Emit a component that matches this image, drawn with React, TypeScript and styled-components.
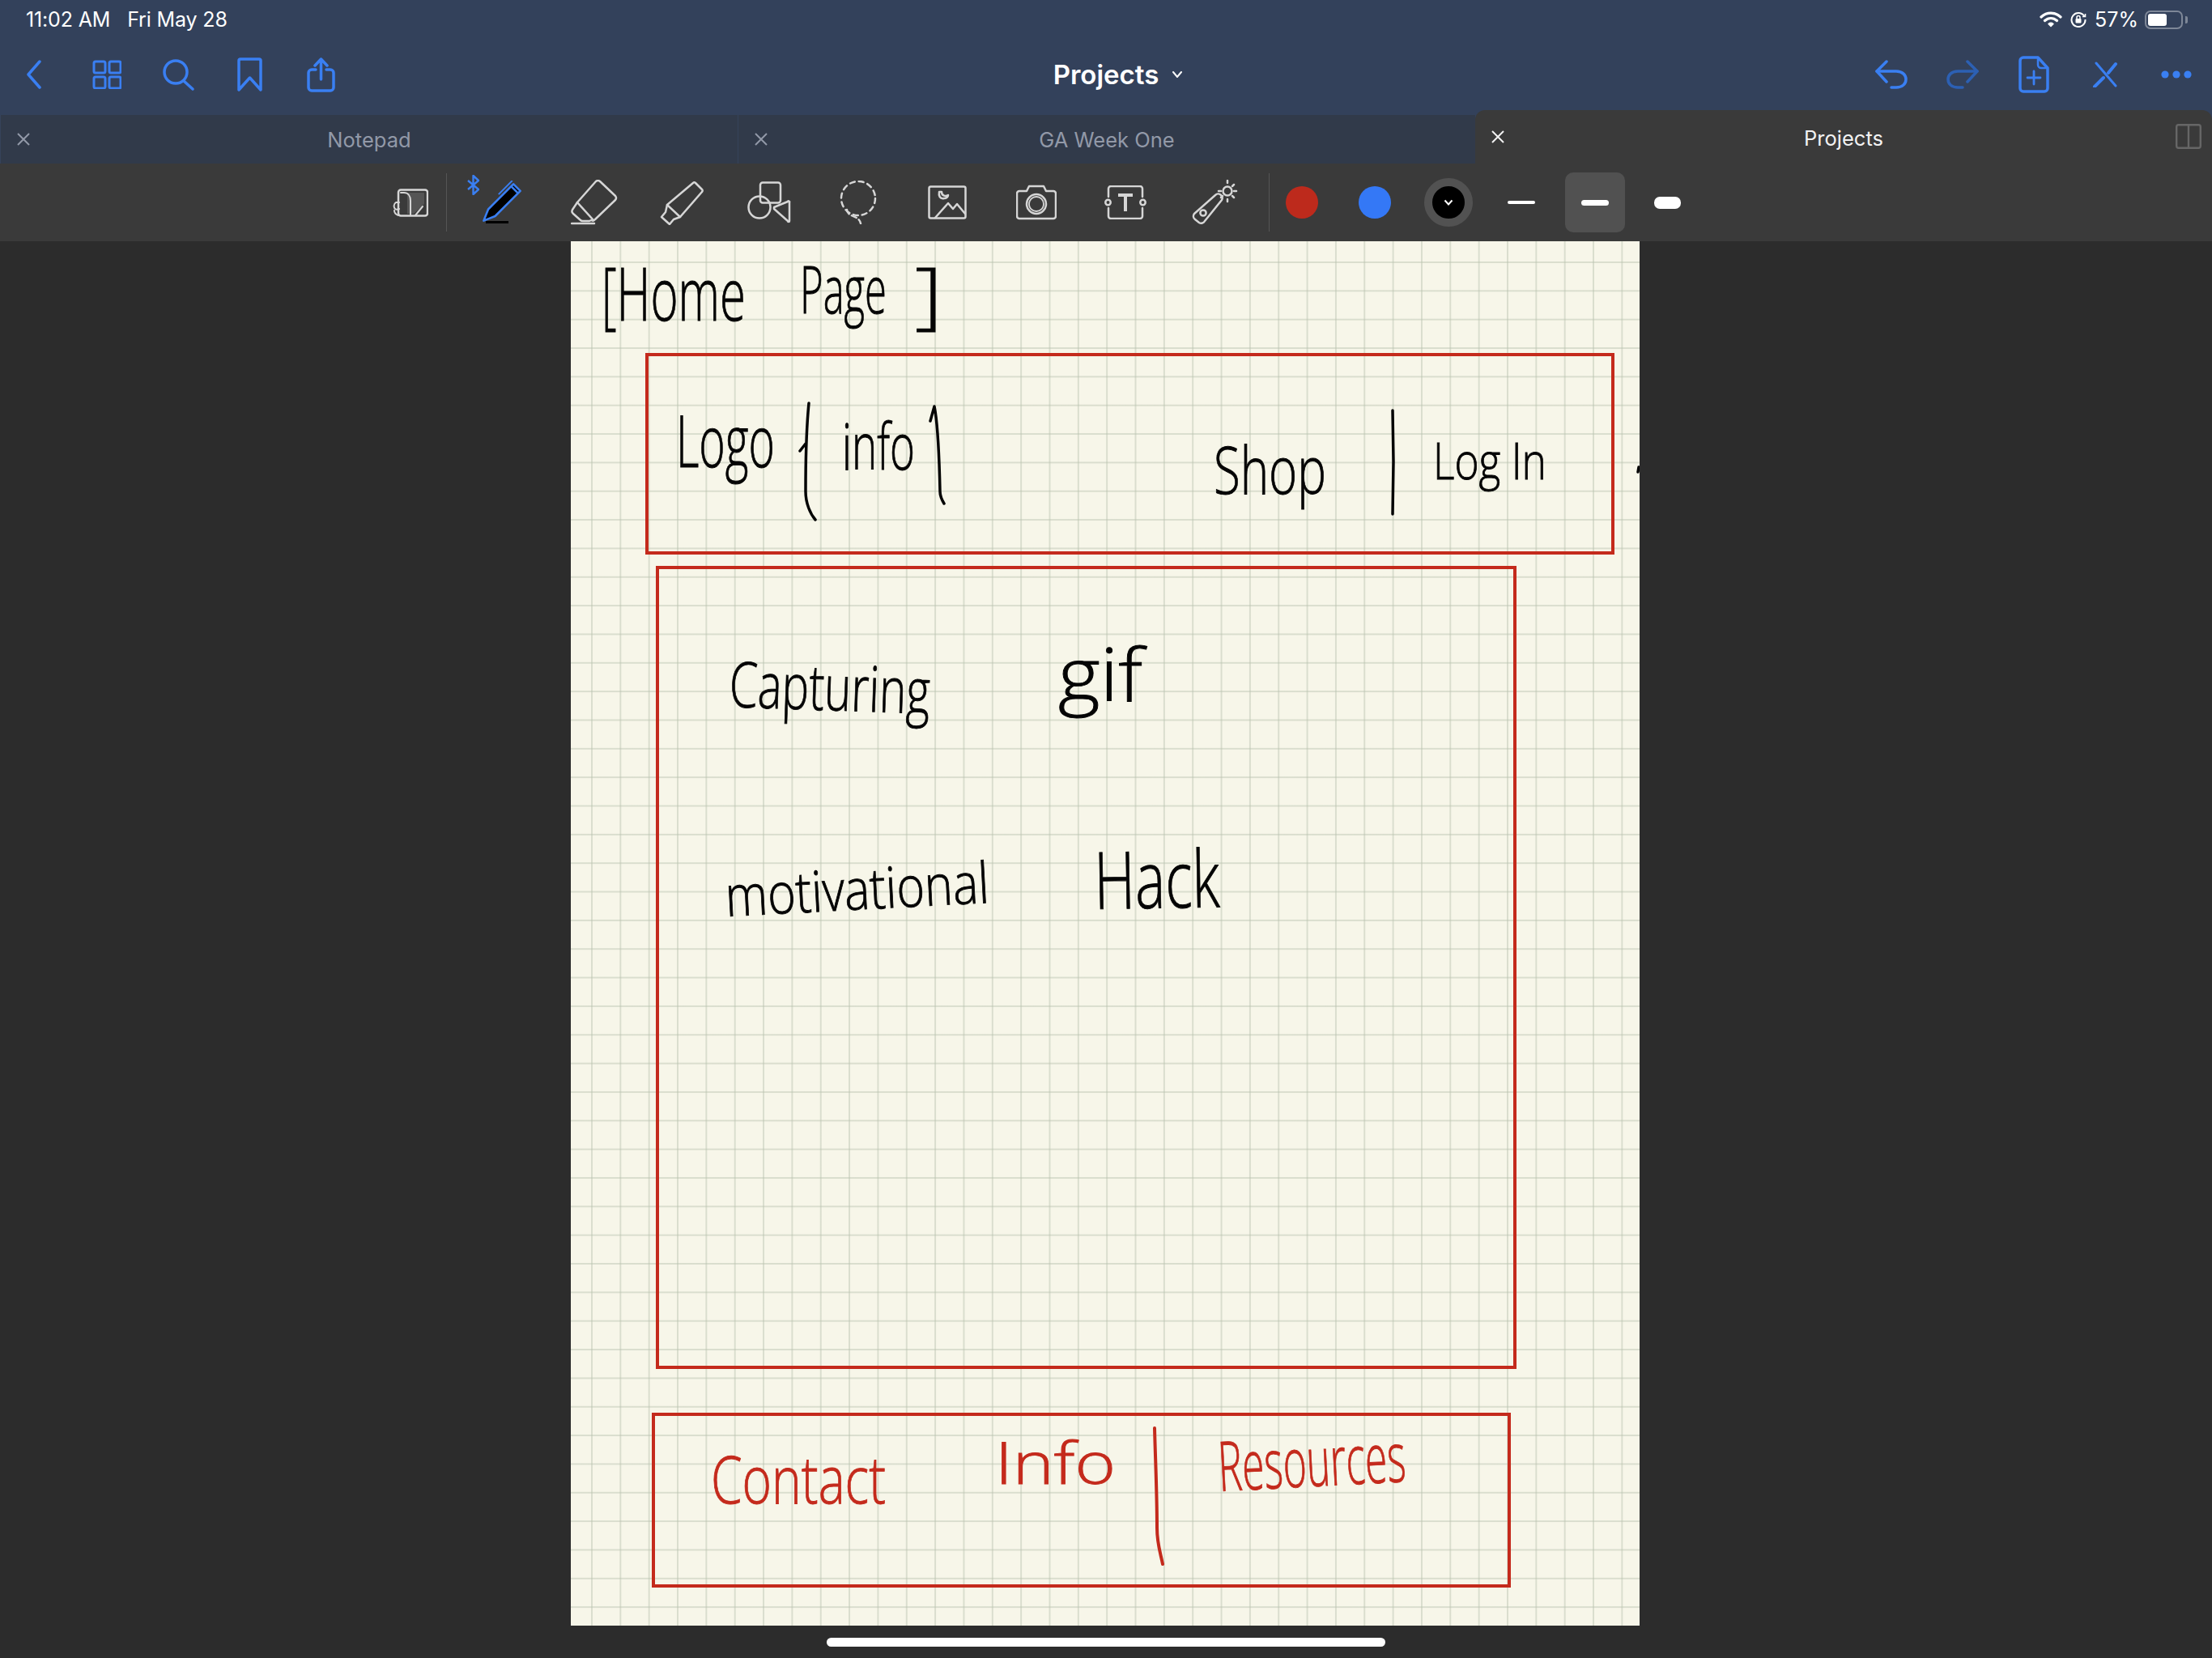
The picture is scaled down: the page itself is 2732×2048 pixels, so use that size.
import React from "react";
import styled, { createGlobalStyle } from "styled-components";

const Global = createGlobalStyle`
  html, body { margin: 0; padding: 0; background: #2c2c2c; }
  body { width: 2732px; height: 2048px; overflow: hidden; font-family: Inter, "Liberation Sans", sans-serif; }
`;

const Screen = styled.div`
  width: 2732px; height: 2048px; display: flex; flex-direction: column; background: #2c2c2c;
`;
const StatusBar = styled.div`
  height: 48px; background: #33415b; color: #fff; display: flex; align-items: center;
  justify-content: space-between; padding: 0 30px 0 32px; box-sizing: border-box; font-size: 25px;
`;
const StatusLeft = styled.div`display: flex; gap: 21px; letter-spacing: -0.15px;`;
const StatusRight = styled.div`display: flex; align-items: center; gap: 10px;`;
const Battery = styled.div`
  width: 47px; height: 23px; border: 2px solid #7e8798; border-radius: 7px; box-sizing: border-box;
  padding: 2px; display: flex; margin-left: -2px;
`;
const BatteryFill = styled.div`width: 23px; background: #fff; border-radius: 3px;`;
const BatteryCap = styled.div`width: 3px; height: 9px; background: #7e8798; border-radius: 0 2px 2px 0; margin-left: -7px;`;

const NavBar = styled.div`
  height: 94px; background: #33415b; display: grid; grid-template-columns: 1fr auto 1fr;
  align-items: center; padding-bottom: 6px; box-sizing: border-box;
`;
const NavGroup = styled.div<{ $end?: boolean }>`
  display: flex; justify-content: ${p => (p.$end ? "flex-end" : "flex-start")};
`;
const NavSlot = styled.div<{ $pull?: number }>`
  width: 88px; height: 50px; display: flex; align-items: center; justify-content: center;
  padding-right: ${p => p.$pull ?? 0}px; box-sizing: border-box;
`;
const Title = styled.div`
  display: flex; align-items: center; gap: 17px; padding-left: 29px; color: #fff; font-size: 33px; font-weight: 600;
`;

const TabBar = styled.div`height: 60px; display: flex; background: #33415b;`;
const Tab = styled.div<{ $active?: boolean }>`
  flex: 1; display: flex; align-items: center; justify-content: center; position: relative;
  background: ${p => (p.$active ? "#3a3a3a" : "#313a4a")};
  color: ${p => (p.$active ? "#f2f2f2" : "#9299a8")};
  font-size: 25.5px;
  margin-top: ${p => (p.$active ? "-6px" : "0")};
  border-radius: ${p => (p.$active ? "12px 12px 0 0" : "0")};
  border-left: ${p => (p.$active ? "none" : "1px solid #36425a")};
  padding-top: ${p => (p.$active ? "2px" : "0")};
`;
const TabClose = styled.svg`position: absolute; left: 20px; top: 50%; margin-top: -8px;`;
const SplitIcon = styled.svg`position: absolute; right: 13px; top: 17px;`;

const Toolbar = styled.div`
  height: 96px; background: #3a3a3a; display: flex; align-items: center; padding-left: 470px; box-sizing: border-box;
`;
const PageSlot = styled.div`width: 74px; display: flex; justify-content: center;`;
const Divider = styled.div<{ $before: number; $after: number }>`
  width: 1px; height: 72px; background: #555; margin: 0 ${p => p.$after}px 0 ${p => p.$before}px;
`;
const ToolSlot = styled.div<{ $nudge?: number }>`
  width: 110px; height: 96px; display: flex; align-items: center; justify-content: center; position: relative;
  padding-left: ${p => p.$nudge ?? 0}px; box-sizing: border-box;
`;
const Bluetooth = styled.svg`position: absolute; left: 12px; top: 14px;`;
const Swatches = styled.div`display: flex; gap: 16.4px;`;
const Swatch = styled.div<{ $selected?: boolean }>`
  width: 74px; height: 74px; border-radius: 10px; display: flex; align-items: center; justify-content: center;
  background: ${p => (p.$selected ? "#515151" : "transparent")};
`;
const Dot = styled.div<{ $color: string }>`width: 40px; height: 40px; border-radius: 50%; background: ${p => p.$color};`;
const Ring = styled.div`
  width: 60px; height: 60px; border-radius: 50%; background: #000; border: 10px solid #525252;
  box-sizing: border-box; display: flex; align-items: center; justify-content: center;
`;
const Stroke = styled.div<{ $w: number; $h: number }>`
  width: ${p => p.$w}px; height: ${p => p.$h}px; border-radius: ${p => Math.min(p.$h / 2, 7)}px; background: #fff;
`;

const Canvas = styled.div`flex: 1; display: flex; justify-content: center; margin-right: 2px; background: #2c2c2c;`;
const Paper = styled.div`
  width: 1320px; height: 1710px; position: relative; background-color: #f7f6e9;
  background-image:
    linear-gradient(to right, rgba(186,195,176,.48) 2px, transparent 2px),
    linear-gradient(to bottom, rgba(186,195,176,.48) 2px, transparent 2px);
  background-size: 35.35px 35.35px;
  background-position: 25px 25px;
`;
const InkLayer = styled.svg`position: absolute; inset: 0; width: 100%; height: 100%;`;
const Ink = styled.text<{ $red?: boolean }>`
  font-family: "Open Sans", "Liberation Sans", sans-serif;
  font-weight: 300;
  fill: ${p => (p.$red ? "#c42a1c" : "#050505")};
  stroke: ${p => (p.$red ? "#c42a1c" : "#050505")};
  stroke-width: 0.9px;
`;
const Footer = styled.div`height: 40px; display: flex; align-items: center; justify-content: center;`;
const HomeBar = styled.div`width: 690px; height: 11px; border-radius: 6px; background: #fff;`;

const BLUE = "#3a7ff2";
const G = "#d6d6d6";

const Close = () => (
  <TabClose width="16" height="16" viewBox="0 0 16 16" fill="none" stroke="currentColor" strokeWidth="2"><path d="M1 1l14 14M15 1L1 15" /></TabClose>
);

const blue = { fill: "none", stroke: BLUE, strokeWidth: 3.5, strokeLinecap: "round" as const, strokeLinejoin: "round" as const };
const gray = { fill: "none", stroke: G, strokeWidth: 2.5, strokeLinecap: "round" as const, strokeLinejoin: "round" as const };

const InkItems: [string, number, number, number, number, number?, boolean?][] = [
  ["[Home", 743, 396, 178, 90],
  ["Page", 988, 387, 107, 82],
  ["]", 1130, 396, 34, 90],
  ["Logo", 835, 577, 122, 88],
  ["info", 1040, 580, 90, 80],
  ["Shop", 1499, 610, 139, 82],
  ["Log In", 1770, 592, 140, 62, 0],
  ["Capturing", 900, 873, 248, 78, 2],
  ["gif", 1307, 866, 104, 90],
  ["motivational", 897, 1132, 326, 70, -3],
  ["Hack", 1352, 1123, 155, 98, -1],
  ["Contact", 878, 1857, 216, 82, 0, true],
  ["Info", 1229, 1833, 149, 72, 0, true],
  ["Resources", 1506, 1842, 232, 85, -3, true],
];

export default function App() {
  return (
    <Screen>
      <Global />
      <StatusBar>
        <StatusLeft><span>11:02 AM</span><span>Fri May 28</span></StatusLeft>
        <StatusRight>
          <svg width="28" height="20" viewBox="0 0 28 20" fill="none" stroke="#fff" strokeWidth="3.2" strokeLinecap="round">
            <path d="M2 7c7-6.5 17-6.5 24 0" /><path d="M6.5 11.5c4.5-4 10.5-4 15 0" /><path d="M14 18.5l-3-3c1.8-1.4 4.2-1.4 6 0z" fill="#fff" strokeWidth="1.5" strokeLinejoin="round" />
          </svg>
          <svg width="20" height="20" viewBox="0 0 20 20" fill="none" stroke="#fff" strokeWidth="2">
            <path d="M17.5 6.5A8.5 8.5 0 1 0 18.5 10" /><path d="M15 6.5h3.5V3" strokeWidth="1.6" /><rect x="6.5" y="9" width="7" height="5.5" rx="1" fill="#fff" stroke="none" /><path d="M8 9V7.5a2 2 0 0 1 4 0V9" strokeWidth="1.5" />
          </svg>
          <span>57%</span>
          <Battery><BatteryFill /></Battery>
          <BatteryCap />
        </StatusRight>
      </StatusBar>

      <NavBar>
        <NavGroup>
          <NavSlot $pull={5}><svg width="20" height="36" viewBox="0 0 20 36" {...blue}><path d="M17 2L3 18l14 16" /></svg></NavSlot>
          <NavSlot><svg width="36" height="36" viewBox="0 0 36 36" {...blue} strokeWidth="3"><rect x="2" y="2" width="14" height="14" rx="2" /><rect x="21" y="2" width="14" height="14" rx="2" /><rect x="2" y="21" width="14" height="14" rx="2" /><rect x="21" y="21" width="14" height="14" rx="2" /></svg></NavSlot>
          <NavSlot><svg width="39" height="39" viewBox="0 0 39 39" {...blue}><circle cx="16" cy="16" r="14" /><path d="M26 27l11 10" /></svg></NavSlot>
          <NavSlot><svg width="31" height="42" viewBox="0 0 31 42" {...blue}><path d="M2 4a2 2 0 0 1 2-2h23a2 2 0 0 1 2 2v36L15.5 25 2 40z" /></svg></NavSlot>
          <NavSlot><svg width="35" height="43" viewBox="0 0 35 43" {...blue}><path d="M11 15H6a4 4 0 0 0-4 4v18a4 4 0 0 0 4 4h23a4 4 0 0 0 4-4V19a4 4 0 0 0-4-4h-5" /><path d="M17.5 27V2M10 10l7.5-8 7.5 8" /></svg></NavSlot>
        </NavGroup>
        <Title>
          <span>Projects</span>
          <svg width="12" height="8" viewBox="0 0 12 8" fill="none" stroke="#fff" strokeWidth="2" strokeLinecap="round"><path d="M1 1l5 6 5-6" /></svg>
        </Title>
        <NavGroup $end>
          <NavSlot><svg width="40" height="36" viewBox="0 0 40 36" {...blue}><path d="M14 2L2 14l12 13" /><path d="M2 14h24c8 0 12 5 12 10 0 6-5 10-12 10h-6" /></svg></NavSlot>
          <NavSlot><svg width="40" height="36" viewBox="0 0 40 36" {...blue} stroke="#2c60b4"><path d="M26 2l12 12-12 13" /><path d="M38 14H14C6 14 2 19 2 24c0 6 5 10 12 10h6" /></svg></NavSlot>
          <NavSlot><svg width="38" height="46" viewBox="0 0 38 46" {...blue}><path d="M6 2h18l12 13v25a4 4 0 0 1-4 4H6a4 4 0 0 1-4-4V6a4 4 0 0 1 4-4z" /><path d="M24 2v9a4 4 0 0 0 4 4h8" strokeWidth="2.5" /><path d="M19 19v16M11 27h16" strokeWidth="2.8" /></svg></NavSlot>
          <NavSlot><svg width="32" height="32" viewBox="0 0 32 32" {...blue}><path d="M5 2l24 28" strokeWidth="3" /><path d="M29 3l-9 11M14 20L3 31" strokeWidth="4" /></svg></NavSlot>
          <NavSlot><svg width="38" height="10" viewBox="0 0 38 10" fill={BLUE}><circle cx="5" cy="5" r="4.6" /><circle cx="19" cy="5" r="4.6" /><circle cx="33" cy="5" r="4.6" /></svg></NavSlot>
        </NavGroup>
      </NavBar>

      <TabBar>
        <Tab><Close />Notepad</Tab>
        <Tab><Close />GA Week One</Tab>
        <Tab $active><Close />Projects
          <SplitIcon width="32" height="31" viewBox="0 0 32 31" fill="none" stroke="#666" strokeWidth="2.4"><rect x="1.2" y="1.2" width="29.6" height="28.6" rx="2.5" /><path d="M16 1v29" /></SplitIcon>
        </Tab>
      </TabBar>

      <Toolbar>
        <PageSlot>
          <svg width="44" height="35" viewBox="0 0 44 35" {...gray}>
            <path d="M18 5h21v14L26 31h-8z" fill="#555" stroke="none" />
            <rect x="7" y="1.5" width="36" height="32" rx="3" />
            <path d="M10 5h4c5 0 8 4 8 10v18M37 22L28 33M8 17H4c-3 2-3 6-1 8 1 1 3 1 5 0M2 27c0 3 2 5 5 6" strokeWidth="2" />
          </svg>
        </PageSlot>
        <Divider $before={7} $after={13} />
        <ToolSlot>
          <Bluetooth width="15" height="25" viewBox="0 0 15 25" fill="none" stroke={BLUE} strokeWidth="2.4" strokeLinejoin="round"><path d="M1 7l13 11-6.500 6V1L14 7 1 18" /></Bluetooth>
          <svg width="54" height="54" viewBox="-27 -27 54 54">
            <g transform="rotate(45)">
              <path d="M-6 -26h12v44l-6 14-6-14z" fill="#000" stroke={BLUE} strokeWidth="2.6" strokeLinejoin="round" />
              <path d="M-6 -22H6" stroke={BLUE} strokeWidth="2.6" />
              <path d="M-10 -28v24" stroke={BLUE} strokeWidth="2" />
            </g>
            <path d="M-20 24.500H8" stroke="#000" strokeWidth="3" />
          </svg>
        </ToolSlot>
        <ToolSlot $nudge={8}>
          <svg width="58" height="56" viewBox="0 0 58 56" {...gray}>
            <path d="M31 2a4 4 0 0 1 5 0l19 18a4 4 0 0 1 0 5L30 49a4 4 0 0 1-5 1l-2 1h-8a4 4 0 0 1-3-1L3 42a4 4 0 0 1-1-5l6-9z" />
            <path d="M8 28l20 22" />
            <path d="M1 54h28" />
          </svg>
        </ToolSlot>
        <ToolSlot>
          <svg width="57" height="55" viewBox="0 0 57 55" {...gray}>
            <path d="M44 3a2 2 0 0 1 3 0l8 8a2 2 0 0 1 0 3L28 45l-8 3-5 6-10-9 5-6 2-9z" />
            <path d="M12 30l16 15" />
          </svg>
        </ToolSlot>
        <ToolSlot>
          <svg width="54" height="52" viewBox="0 0 54 52" {...gray}>
            <rect x="16" y="1.500" width="25" height="25" rx="3" />
            <circle cx="15" cy="32" r="13.500" />
            <path d="M33 32l17-7a1 1 0 0 1 2 1v23a1 1 0 0 1-2 0l-17-15z" />
          </svg>
        </ToolSlot>
        <ToolSlot>
          <svg width="48" height="54" viewBox="0 0 48 54" {...gray}>
            <circle cx="24" cy="22" r="21" strokeDasharray="6 5" />
            <path d="M10 36c0 5 5 7 10 9 4 2 6 4 7 8" strokeDasharray="6 4" />
          </svg>
        </ToolSlot>
        <ToolSlot>
          <svg width="48" height="42" viewBox="0 0 48 42" {...gray}>
            <rect x="1.500" y="1.500" width="45" height="39" rx="2" />
            <path d="M14 8c-1 5 1 9 6 8 3 0 5-2 5-4-3 2-8 1-8-4z" />
            <path d="M9 40l16-18 6 7 5-6 10 12" />
          </svg>
        </ToolSlot>
        <ToolSlot>
          <svg width="50" height="44" viewBox="0 0 50 44" {...gray}>
            <path d="M4 8h9l3-6h18l3 6h9a3 3 0 0 1 3 3v28a3 3 0 0 1-3 3H4a3 3 0 0 1-3-3V11a3 3 0 0 1 3-3z" />
            <circle cx="25" cy="24" r="12" />
            <circle cx="25" cy="24" r="9" strokeWidth="1.800" />
          </svg>
        </ToolSlot>
        <ToolSlot>
          <svg width="52" height="42" viewBox="0 0 52 42" {...gray}>
            <path d="M5 14V4a3 3 0 0 1 3-3h36a3 3 0 0 1 3 3v10M5 28v10a3 3 0 0 0 3 3h36a3 3 0 0 0 3-3V28" />
            <circle cx="4.500" cy="21" r="3.200" /><circle cx="47.500" cy="21" r="3.200" />
            <path d="M17 12h18M26 12v20" strokeWidth="4" strokeLinecap="butt" />
          </svg>
        </ToolSlot>
        <ToolSlot>
          <svg width="58" height="56" viewBox="0 0 58 56" {...gray}>
            <path d="M30 19a5 5 0 0 1 7 0 5 5 0 0 1 1 6L17 51a5 5 0 0 1-7 2l-5-4a5 5 0 0 1-1-7z" />
            <circle cx="15" cy="41" r="3.600" />
            <circle cx="45" cy="14" r="5.500" />
            <path d="M45 1v3M45 24v3M56 14h-3M37 14h-3M53 6l-2 2M39 20l-2 2M53 22l-2-2" />
          </svg>
        </ToolSlot>
        <Divider $before={12} $after={3} />
        <Swatches>
          <Swatch><Dot $color="#bd2a1c" /></Swatch>
          <Swatch><Dot $color="#3478f6" /></Swatch>
          <Swatch>
            <Ring><svg width="12" height="8" viewBox="0 0 12 8" fill="none" stroke="#fff" strokeWidth="2"><path d="M1.500 1.500L6 6.500l4.500-5" /></svg></Ring>
          </Swatch>
          <Swatch><Stroke $w={34} $h={4} /></Swatch>
          <Swatch $selected><Stroke $w={34} $h={7} /></Swatch>
          <Swatch><Stroke $w={33} $h={15} /></Swatch>
        </Swatches>
      </Toolbar>

      <Canvas>
        <Paper>
          <InkLayer viewBox="705 298 1320 1710">
            <g fill="none" stroke="#c42a1c" strokeWidth="4">
              <rect x="799" y="438" width="1193" height="245" />
              <rect x="812" y="701" width="1059" height="988" />
              <rect x="807" y="1747" width="1057" height="212" />
              <path d="M1426 1764c1 40 3 80 3 123 0 20 4 30 7 45" strokeLinecap="round" />
            </g>
            <g fill="none" stroke="#050505" strokeWidth="3.500" strokeLinecap="round" strokeLinejoin="round">
              <path d="M988 557l7-9M999 498c-3 30-4 60-4 109 0 15 6 28 12 35" />
              <path d="M1149 520l5-18c4 20 6 60 7 105 0 5 2 10 5 15" />
              <path d="M1720 507l1 63-1 65" />
              <path d="M2024 577l-1 6" />
            </g>
            {InkItems.map(([t, x, y, len, size, rot, red]) => (
              <Ink
                key={t}
                $red={red}
                x={x}
                y={y}
                fontSize={size}
                textLength={len}
                lengthAdjust="spacingAndGlyphs"
                transform={rot ? `rotate(${rot} ${x} ${y})` : undefined}
              >
                {t}
              </Ink>
            ))}
          </InkLayer>
        </Paper>
      </Canvas>
      <Footer><HomeBar /></Footer>
    </Screen>
  );
}
